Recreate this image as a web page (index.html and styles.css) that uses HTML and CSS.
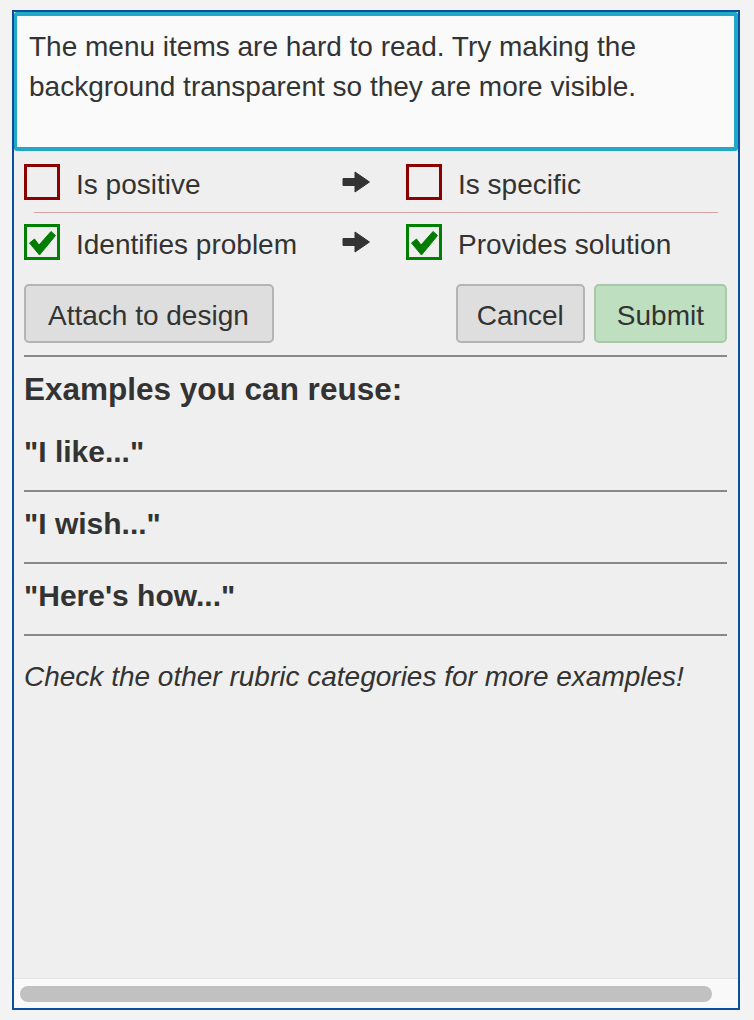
FILE: index.html
```html
<!DOCTYPE html>
<html lang="en">
<head>
<meta charset="utf-8">
<title>Feedback</title>
<link rel="stylesheet" href="styles.css">
</head>
<body>
<div class="frame">
  <div class="pane">
    <div class="comment">The menu items are hard to read. Try making the background transparent so they are more visible.</div>
    <div class="body">
      <div class="rubric-row">
        <span class="box box-off"></span>
        <span class="label">Is positive</span>
        <svg class="arrow" viewBox="0 0 28 22" width="28" height="22"><path d="M1 7.5 H13 V1 L27.5 11 L13 21 V14.5 H1 Z" fill="#333" stroke="#333" stroke-width="1" stroke-linejoin="round"/></svg>
        <span class="box box-off"></span>
        <span class="label">Is specific</span>
      </div>
      <div class="rubric-sep"></div>
      <div class="rubric-row">
        <span class="box box-on"><svg viewBox="0 0 30 30" width="30" height="30"><path d="M2.5 15 L7.5 11 L12 17 L24 3.5 L28.5 7.5 L12.5 27 Z" fill="#007d00" stroke="#007d00" stroke-width="1" stroke-linejoin="round"/></svg></span>
        <span class="label">Identifies problem</span>
        <svg class="arrow" viewBox="0 0 28 22" width="28" height="22"><path d="M1 7.5 H13 V1 L27.5 11 L13 21 V14.5 H1 Z" fill="#333" stroke="#333" stroke-width="1" stroke-linejoin="round"/></svg>
        <span class="box box-on"><svg viewBox="0 0 30 30" width="30" height="30"><path d="M2.5 15 L7.5 11 L12 17 L24 3.5 L28.5 7.5 L12.5 27 Z" fill="#007d00" stroke="#007d00" stroke-width="1" stroke-linejoin="round"/></svg></span>
        <span class="label">Provides solution</span>
      </div>
      <div class="actions">
        <button class="btn btn-attach">Attach to design</button>
        <div class="actions-right">
          <button class="btn btn-cancel">Cancel</button>
          <button class="btn btn-submit">Submit</button>
        </div>
      </div>
      <div class="rule"></div>
      <h4 class="examples-title">Examples you can reuse:</h4>
      <div class="example">"I like..."</div>
      <div class="example">"I wish..."</div>
      <div class="example">"Here's how..."</div>
      <p class="hint">Check the other rubric categories for more examples!</p>
    </div>
  </div>
  <div class="hscroll"><div class="thumb"></div></div>
</div>
</body>
</html>
```
FILE: styles.css
```css
html, body {
  margin: 0;
  padding: 0;
}
body {
  background: #f3f3f3;
  font-family: "Liberation Sans", Arial, Helvetica, sans-serif;
  color: #333;
}
.frame {
  box-sizing: border-box;
  width: 728px;
  height: 1000px;
  margin: 10px 0 0 12px;
  border: 2px solid #0b4ea2;
  background: #efefef;
  display: flex;
  flex-direction: column;
}
.pane {
  flex: 1;
  overflow: hidden;
}
.comment {
  box-sizing: border-box;
  height: 139px;
  border: 4px solid #20a8c4;
  border-left-width: 3px;
  border-radius: 3px;
  background: #fafafa;
  padding: 11px 12px 0 12px;
  font-size: 28px;
  line-height: 40px;
}
.body {
  padding: 0 11px 0 10px;
}
.rubric-row {
  display: grid;
  grid-template-columns: 36px 282px 64px 36px 1fr;
  align-items: center;
  height: 36px;
  font-size: 28px;
  line-height: 36px;
}
.rubric-row:first-child {
  margin-top: 13px;
}
.label {
  padding-left: 16px;
  white-space: nowrap;
  position: relative;
  top: 3px;
}
.box {
  box-sizing: border-box;
  width: 36px;
  height: 36px;
  border: 3px solid #8b0000;
  display: flex;
  align-items: center;
  justify-content: center;
}
.box-on {
  border-color: #008000;
}
.box svg {
  display: block;
  margin-top: 2px;
}
.arrow {
  display: block;
}
.rubric-sep {
  height: 1px;
  background: #d5a5a5;
  margin: 12px 9px 11px 10px;
}
.actions {
  display: flex;
  justify-content: space-between;
  margin-top: 24px;
}
.actions-right {
  display: flex;
  gap: 9px;
}
.btn {
  box-sizing: border-box;
  height: 59px;
  padding: 4px 21px 0 21px;
  font-family: "Liberation Sans", Arial, Helvetica, sans-serif;
  font-size: 28px;
  color: #333;
  background: #dedede;
  border: 2px solid #b4b4b4;
  border-radius: 5px;
}
.btn-attach {
  padding-left: 22px;
  padding-right: 23px;
}
.btn-cancel {
  padding-left: 19px;
  padding-right: 19px;
}
.btn-submit {
  background: #bfe0c0;
  border-color: #a8c8a9;
}
.rule {
  height: 2px;
  background: #888;
  margin-top: 12px;
}
.examples-title {
  margin: 14px 0 0 0;
  font-size: 31.5px;
  line-height: 36px;
  font-weight: bold;
}
.example {
  margin: 0;
  padding: 14px 0 20px 0;
  font-size: 30px;
  line-height: 36px;
  font-weight: bold;
  border-bottom: 2px solid #888;
}
.examples-title + .example {
  margin-top: 13px;
}
.hint {
  margin: 21px 0 0 0;
  font-size: 28px;
  line-height: 40px;
  font-style: italic;
}
.hscroll {
  box-sizing: border-box;
  height: 30px;
  border-top: 1px solid #e4e4e4;
  background: #f9f9f9;
  padding: 7px 0 0 6px;
}
.thumb {
  width: 692px;
  height: 16px;
  border-radius: 8px;
  background: #c1c1c1;
}
```
